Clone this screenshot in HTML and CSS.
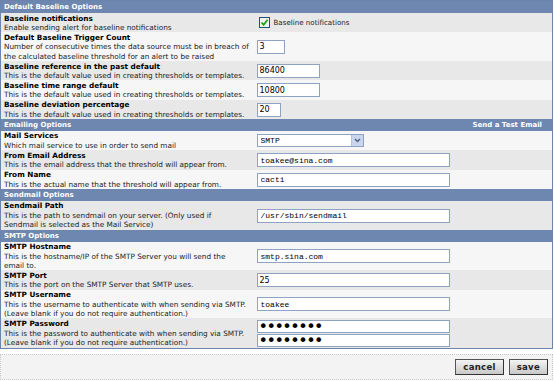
FILE: index.html
```html
<!DOCTYPE html>
<html>
<head>
    <title>Threshold Settings</title>
    <link rel="stylesheet" href="styles.css">
</head>
<body>
<form id="settings">
    <table class="opts">
        <colgroup><col class="col-lbl"><col></colgroup>
        <tr class="hdr"><td colspan="2">Default Baseline Options</td></tr>
        <tr class="dark">
            <td class="lbl"><b>Baseline notifications</b><br>Enable sending alert for baseline notifications</td>
            <td class="ctl">
                <label class="chk">
                    <span class="box"><svg width="9" height="9" viewBox="0 0 9 9"><path d="M1.5 4.5 L3.6 6.8 L7.6 1.8" fill="none" stroke="#21a121" stroke-width="1.8"/></svg></span>
                    Baseline notifications
                </label>
            </td>
        </tr>
        <tr>
            <td class="lbl"><b>Default Baseline Trigger Count</b><br>Number of consecutive times the data source must be in breach of the calculated baseline threshold for an alert to be raised</td>
            <td class="ctl"><input class="txt num tiny" type="text" value="3"></td>
        </tr>
        <tr class="dark">
            <td class="lbl"><b>Baseline reference in the past default</b><br>This is the default value used in creating thresholds or templates.</td>
            <td class="ctl"><input class="txt num mid" type="text" value="86400"></td>
        </tr>
        <tr>
            <td class="lbl"><b>Baseline time range default</b><br>This is the default value used in creating thresholds or templates.</td>
            <td class="ctl"><input class="txt num mid" type="text" value="10800"></td>
        </tr>
        <tr class="dark">
            <td class="lbl"><b>Baseline deviation percentage</b><br>This is the default value used in creating thresholds or templates.</td>
            <td class="ctl"><input class="txt num small" type="text" value="20"></td>
        </tr>

        <tr class="hdr"><td colspan="2"><div class="hdr-row"><span>Emailing Options</span><a href="#">Send a Test Email</a></div></td></tr>
        <tr>
            <td class="lbl"><b>Mail Services</b><br>Which mail service to use in order to send mail</td>
            <td class="ctl">
                <span class="sel">
                    <select><option>SMTP</option><option>Sendmail</option></select>
                    <span class="arr"><svg width="7" height="5" viewBox="0 0 7 5"><path d="M1 1 L3.5 3.5 L6 1" fill="none" stroke="#4d6185" stroke-width="1.4"/></svg></span>
                </span>
            </td>
        </tr>
        <tr class="dark">
            <td class="lbl"><b>From Email Address</b><br>This is the email address that the threshold will appear from.</td>
            <td class="ctl"><input class="txt wide" type="text" value="toakee@sina.com"></td>
        </tr>
        <tr>
            <td class="lbl"><b>From Name</b><br>This is the actual name that the threshold will appear from.</td>
            <td class="ctl"><input class="txt wide" type="text" value="cacti"></td>
        </tr>

        <tr class="hdr"><td colspan="2">Sendmail Options</td></tr>
        <tr class="dark">
            <td class="lbl"><b>Sendmail Path</b><br>This is the path to sendmail on your server. (Only used if<br>Sendmail is selected as the Mail Service)</td>
            <td class="ctl"><input class="txt wide" type="text" value="/usr/sbin/sendmail"></td>
        </tr>

        <tr class="hdr"><td colspan="2">SMTP Options</td></tr>
        <tr>
            <td class="lbl"><b>SMTP Hostname</b><br>This is the hostname/IP of the SMTP Server you will send the<br>email to.</td>
            <td class="ctl"><input class="txt wide" type="text" value="smtp.sina.com"></td>
        </tr>
        <tr class="dark">
            <td class="lbl"><b>SMTP Port</b><br>This is the port on the SMTP Server that SMTP uses.</td>
            <td class="ctl"><input class="txt wide num" type="text" value="25"></td>
        </tr>
        <tr>
            <td class="lbl"><b>SMTP Username</b><br>This is the username to authenticate with when sending via SMTP. (Leave blank if you do not require authentication.)</td>
            <td class="ctl"><input class="txt wide" type="text" value="toakee"></td>
        </tr>
        <tr class="dark">
            <td class="lbl"><b>SMTP Password</b><br>This is the password to authenticate with when sending via SMTP. (Leave blank if you do not require authentication.)</td>
            <td class="ctl pw">
                <input class="txt wide pass" type="password" value="12345678">
                <input class="txt wide pass" type="password" value="12345678">
            </td>
        </tr>
    </table>

    <div class="actions">
        <button type="button" class="btn">cancel</button>
        <button type="submit" class="btn">save</button>
    </div>
</form>
</body>
</html>
```

FILE: styles.css
```css
body {
  margin: 0;
  background: #fff;
  color: #000;
  font-family: "DejaVu Sans", Verdana, sans-serif;
  font-size: 7.3px;
}

.opts {
  width: 553px;
  table-layout: fixed;
  border-collapse: collapse;
  border: 1px solid #6b84ac;
}

.col-lbl {
  width: 253px;
}

.opts td {
  padding: 0.5px 1px 0 3px;
  line-height: 9.4px;
  vertical-align: middle;
  background: #f6f6f6;
}

.opts tr.dark td {
  background: #e8e8e8;
}

.opts .hdr td {
  height: 12px;
  padding: 0 3px;
  background: #6d87b0;
  color: #fff;
  font-size: 7px;
  font-weight: bold;
  line-height: 12px;
}

.hdr-row {
  display: flex;
  justify-content: space-between;
  padding-right: 7px;
}

.hdr-row a {
  color: #fff;
  text-decoration: none;
}

.lbl {
  color: #222;
}

.lbl b {
  color: #000;
}

.opts td.ctl {
  padding-left: 3px;
}

.chk {
  display: flex;
  align-items: center;
  gap: 4px;
  padding-left: 2px;
  color: #222;
  font-size: 7.1px;
}

.box {
  display: flex;
  align-items: center;
  justify-content: center;
  width: 9px;
  height: 9px;
  border: 1px solid #1c5180;
  background: #f2f2ee;
}

.txt {
  box-sizing: border-box;
  height: 14px;
  margin: 0;
  padding: 0 3px;
  border: 1px solid #8ea3c4;
  background: #fff;
  color: #000;
  font-family: "Liberation Mono", "DejaVu Sans Mono", monospace;
  font-size: 8px;
  vertical-align: middle;
}

.txt.num {
  font-family: "DejaVu Sans", Verdana, sans-serif;
  font-size: 8px;
  padding-left: 2px;
}

.tiny { width: 28px; }
.small { width: 24px; }
.mid { width: 63px; }
.wide { width: 193px; }

.opts td.pw {
  display: flex;
  flex-direction: column;
  gap: 1px;
  padding-top: 1.5px;
  padding-bottom: 1px;
}

.pass {
  height: 13px;
  font-family: "DejaVu Sans", sans-serif;
  font-size: 16px;
  letter-spacing: -1.5px;
  padding-left: 1px;
}

.sel {
  display: inline-flex;
  align-items: center;
  box-sizing: border-box;
  width: 107px;
  height: 13px;
  border: 1px solid #8ea3c4;
  background: #fff;
  vertical-align: middle;
}

.sel select {
  flex: 1;
  appearance: none;
  border: 0;
  padding: 0 3px;
  background: transparent;
  font-family: "Liberation Mono", monospace;
  font-size: 8px;
  outline: none;
}

.arr {
  display: flex;
  align-items: center;
  justify-content: center;
  width: 11px;
  height: 11px;
  background: #c9d6ee;
  border-left: 1px solid #b2c2e0;
}

.actions {
  box-sizing: border-box;
  display: flex;
  justify-content: flex-end;
  align-items: center;
  gap: 5px;
  width: 553px;
  height: 26px;
  margin-top: 5px;
  padding-right: 4px;
  border: 1px dotted #c8c8c8;
  background: #f3f3f3;
}

.btn {
  height: 16px;
  padding: 0 7px;
  border: 1px solid #555;
  border-right-color: #333;
  border-bottom-color: #333;
  background: linear-gradient(#f4f4f4, #c8c8c8);
  color: #222;
  font-family: "DejaVu Sans", Verdana, sans-serif;
  font-size: 8.5px;
  font-weight: bold;
  letter-spacing: 0.3px;
}
```
